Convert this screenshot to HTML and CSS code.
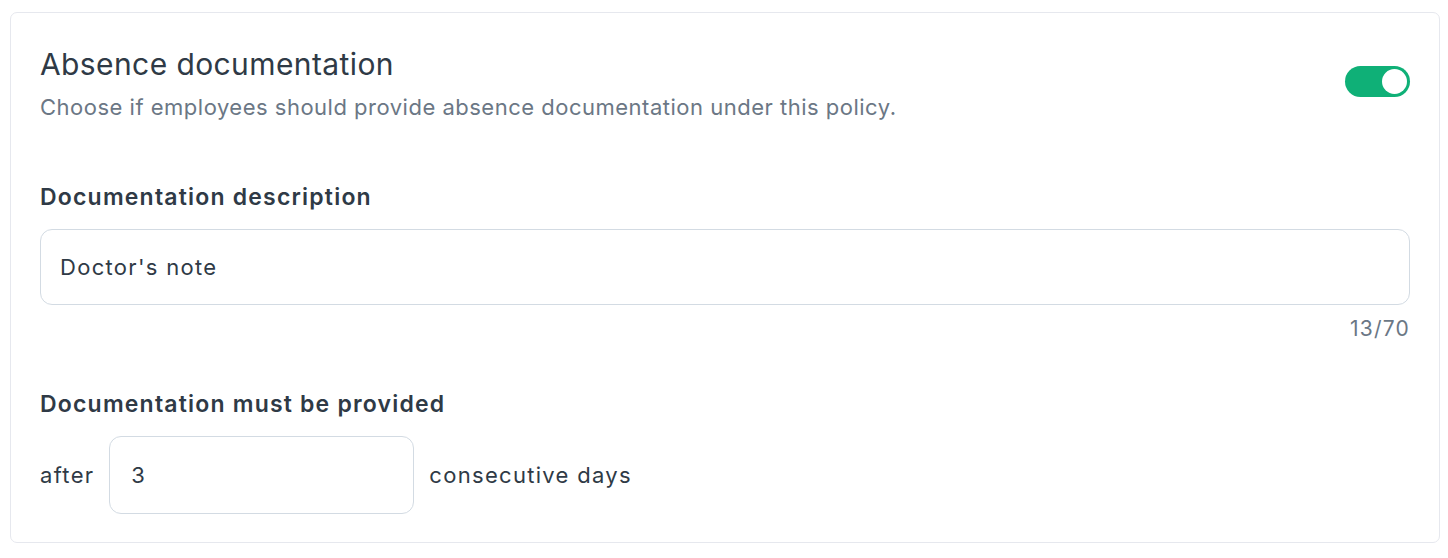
FILE: index.html
```html
<!DOCTYPE html>
<html lang="en">
<head>
<meta charset="utf-8">
<link rel="stylesheet" href="styles.css">
</head>
<body>
<section class="card">
  <div class="header">
    <div class="header-text">
      <h2 class="title">Absence documentation</h2>
      <p class="subtitle">Choose if employees should provide absence documentation under this policy.</p>
    </div>
    <div class="toggle" role="switch" aria-checked="true"><span class="knob"></span></div>
  </div>

  <div class="field field-desc">
    <label class="label">Documentation description</label>
    <div class="input wide">Doctor's note</div>
    <div class="counter">13/70</div>
  </div>

  <div class="field field-days">
    <label class="label">Documentation must be provided</label>
    <div class="row">
      <span class="row-text">after</span>
      <div class="input small">3</div>
      <span class="row-text">consecutive days</span>
    </div>
  </div>
</section>
</body>
</html>
```

FILE: styles.css
```css
* { box-sizing: border-box; }
html, body { margin: 0; padding: 0; background: #ffffff; }
body {
  font-family: Inter, "Noto Sans", sans-serif;
  color: #2f3a46;
  padding: 12px 8px 0 10px;
}
.card {
  width: 1430px;
  height: 531px;
  border: 1px solid #e6e8ee;
  border-radius: 7px;
  padding: 33px 29px 29px 29px;
  background: #fff;
}
.header {
  display: flex;
  justify-content: space-between;
  align-items: flex-start;
}
.title {
  margin: 0;
  font-size: 30px;
  line-height: 36px;
  font-weight: 400;
  letter-spacing: 0.4px;
  color: #2f3a46;
}
.subtitle {
  margin: 11px 0 0;
  font-size: 22px;
  line-height: 28px;
  letter-spacing: 0.5px;
  color: #6b7785;
}
.toggle {
  margin-top: 20px;
  width: 65px;
  height: 31px;
  border-radius: 16px;
  background: #0fb077;
  display: flex;
  align-items: center;
  justify-content: flex-end;
  padding: 3px;
}
.knob {
  width: 25px;
  height: 25px;
  border-radius: 50%;
  background: #fff;
}
.field-desc { margin-top: 62px; }
.field-days { margin-top: 47px; }
.label {
  display: block;
  font-size: 23px;
  line-height: 28px;
  font-weight: 600;
  letter-spacing: 1.2px;
  color: #2f3a46;
}
.input {
  border: 1px solid #d3dbe3;
  border-radius: 12px;
  display: flex;
  align-items: center;
  font-size: 22px;
  letter-spacing: 1.3px;
  color: #2f3a46;
}
.wide {
  margin-top: 18px;
  height: 76px;
  padding-left: 19px;
}
.counter {
  margin-top: 10px;
  text-align: right;
  font-size: 21px;
  line-height: 28px;
  letter-spacing: 1.2px;
  color: #6b7785;
}
.row {
  margin-top: 18px;
  display: flex;
  align-items: center;
  gap: 15px;
}
.row-text {
  font-size: 22px;
  letter-spacing: 1.3px;
  color: #2f3a46;
}
.small {
  width: 305px;
  height: 78px;
  padding-left: 21px;
}
```
